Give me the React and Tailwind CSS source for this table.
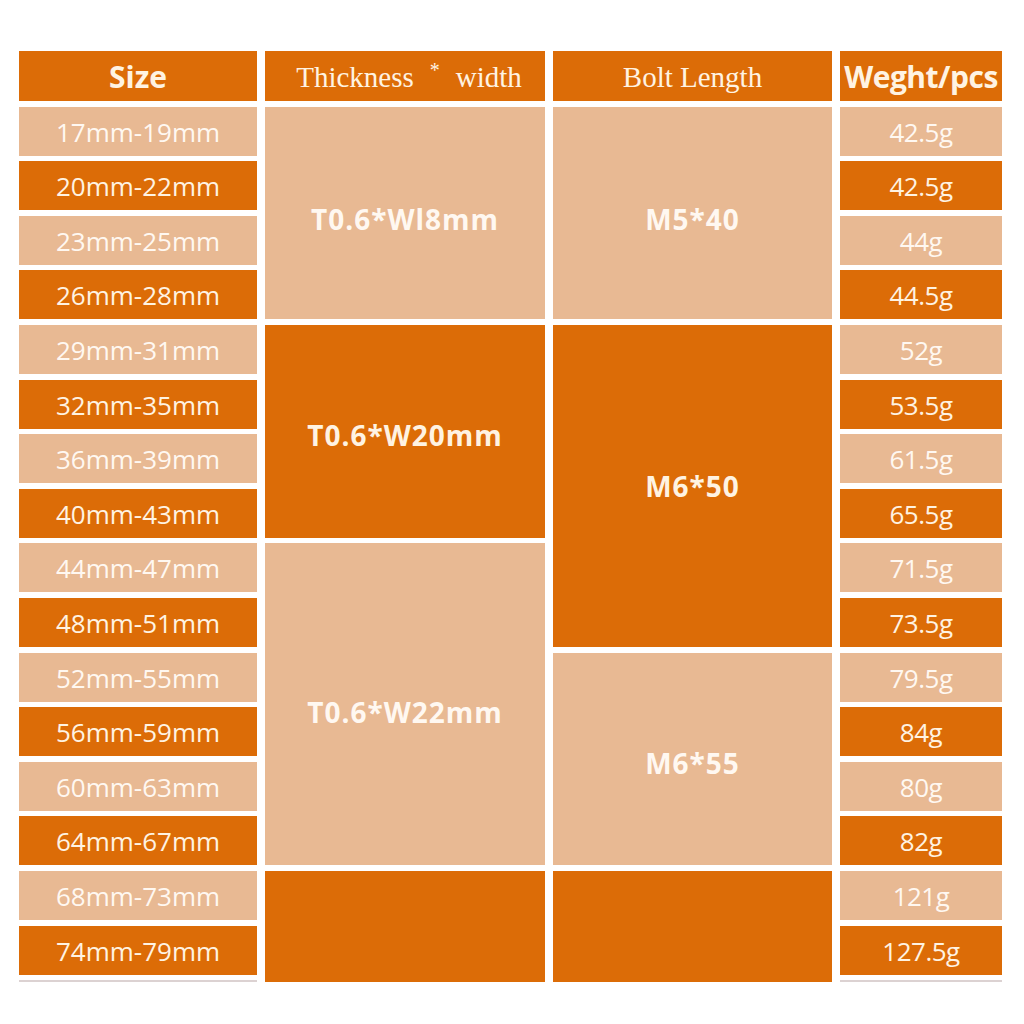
const rows = [
  "row-start-2",
  "row-start-3",
  "row-start-4",
  "row-start-5",
  "row-start-6",
  "row-start-7",
  "row-start-8",
  "row-start-9",
  "row-start-10",
  "row-start-11",
  "row-start-12",
  "row-start-13",
  "row-start-14",
  "row-start-15",
  "row-start-16",
  "row-start-17",
];

const sizes = [
  "17mm-19mm",
  "20mm-22mm",
  "23mm-25mm",
  "26mm-28mm",
  "29mm-31mm",
  "32mm-35mm",
  "36mm-39mm",
  "40mm-43mm",
  "44mm-47mm",
  "48mm-51mm",
  "52mm-55mm",
  "56mm-59mm",
  "60mm-63mm",
  "64mm-67mm",
  "68mm-73mm",
  "74mm-79mm",
];

const weights = [
  "42.5g",
  "42.5g",
  "44g",
  "44.5g",
  "52g",
  "53.5g",
  "61.5g",
  "65.5g",
  "71.5g",
  "73.5g",
  "79.5g",
  "84g",
  "80g",
  "82g",
  "121g",
  "127.5g",
];

const sans = "font-['Open_Sans','Noto_Sans',sans-serif]";
const serif = "font-['Liberation_Serif','DejaVu_Serif',serif]";

const dark = "bg-[#dc6c07] text-[#fff3e2]";
const light = "bg-[#e8b993] text-[#fff8f1]";

const App = () => {
  return (
    <div className="w-[1024px] h-[1024px] bg-white pt-[51px] pl-[19px]">
      <div className="grid grid-cols-[238px_280px_279px_162px] grid-rows-[50px_repeat(16,49px)_2px] gap-x-[8px] gap-y-[5.6px]">
        {/* header */}
        <div className={`${dark} ${sans} col-start-1 row-start-1 flex items-center justify-center text-[30px] font-bold`}>
          Size
        </div>
        <div className={`${dark} ${serif} col-start-2 row-start-1 flex items-center justify-center text-[29px] pl-2 pt-1`}>
          Thickness
          <span className="text-[20px] -translate-y-2 mx-[16px]">*</span>
          width
        </div>
        <div className={`${dark} ${serif} col-start-3 row-start-1 flex items-center justify-center text-[29px] pt-1`}>
          Bolt Length
        </div>
        <div className={`${dark} ${sans} col-start-4 row-start-1 flex items-center justify-center text-[30px] font-bold tracking-[-0.5px]`}>
          Weght/pcs
        </div>

        {/* size column */}
        {sizes.map((s, i) => (
          <div
            key={s}
            className={`${i % 2 === 0 ? light : dark} ${sans} ${rows[i]} col-start-1 flex items-center justify-center text-[26px] pt-[2px]`}
          >
            {s}
          </div>
        ))}
        <div className="col-start-1 row-start-18 bg-[#dcd2d2] h-[2px]"></div>

        {/* thickness * width */}
        <div className={`${light} ${sans} col-start-2 row-start-2 row-span-4 flex items-center justify-center text-[28px] font-bold tracking-[1px] pt-3`}>
          T0.6*Wl8mm
        </div>
        <div className={`${dark} ${sans} col-start-2 row-start-6 row-span-4 flex items-center justify-center text-[28px] font-bold tracking-[1px] pt-2`}>
          T0.6*W20mm
        </div>
        <div className={`${light} ${sans} col-start-2 row-start-10 row-span-6 flex items-center justify-center text-[28px] font-bold tracking-[1px] pt-4`}>
          T0.6*W22mm
        </div>
        <div className={`${dark} col-start-2 row-start-16 row-span-3`}></div>

        {/* bolt length */}
        <div className={`${light} ${sans} col-start-3 row-start-2 row-span-4 flex items-center justify-center text-[28px] font-bold tracking-[1px] pt-3`}>
          M5*40
        </div>
        <div className={`${dark} ${sans} col-start-3 row-start-6 row-span-6 flex items-center justify-center text-[28px] font-bold tracking-[1px]`}>
          M6*50
        </div>
        <div className={`${light} ${sans} col-start-3 row-start-12 row-span-4 flex items-center justify-center text-[28px] font-bold tracking-[1px] pt-2`}>
          M6*55
        </div>
        <div className={`${dark} col-start-3 row-start-16 row-span-3`}></div>

        {/* weight column */}
        {weights.map((w, i) => (
          <div
            key={i}
            className={`${i % 2 === 0 ? light : dark} ${sans} ${rows[i]} col-start-4 flex items-center justify-center text-[26px] tracking-[-0.5px] pt-[2px]`}
          >
            {w}
          </div>
        ))}
        <div className="col-start-4 row-start-18 bg-[#dcd2d2] h-[2px]"></div>
      </div>
    </div>
  );
};

export default App;
